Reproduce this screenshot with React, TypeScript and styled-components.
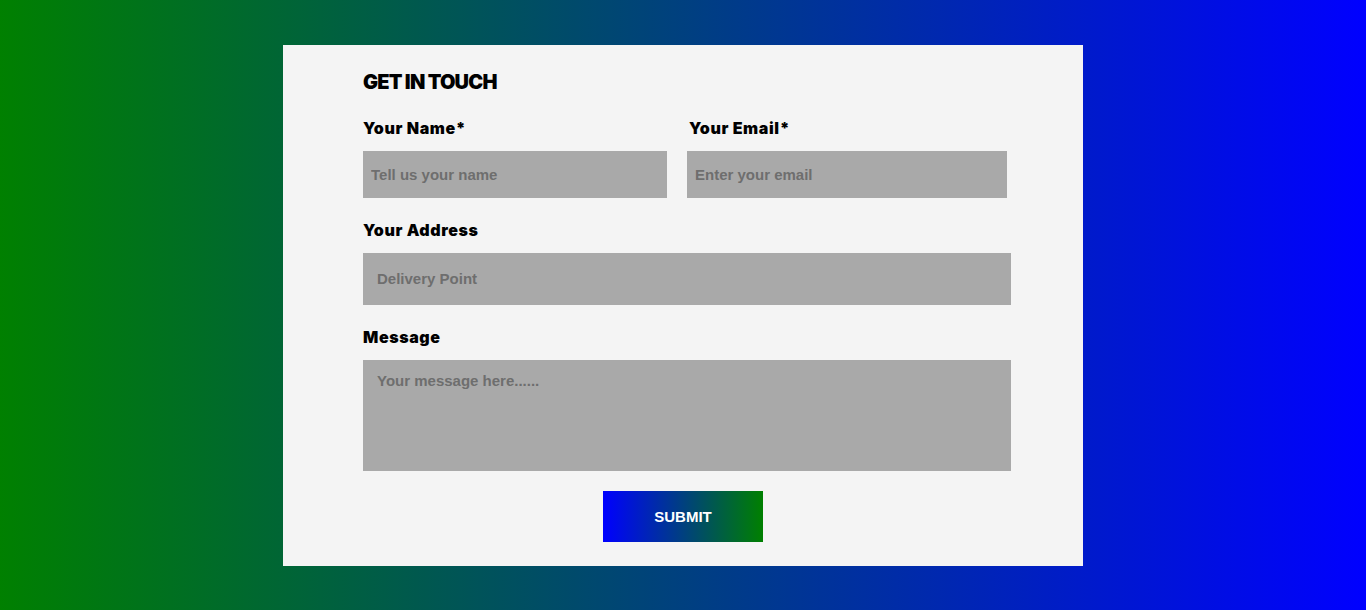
import React from 'react';
import styled, { createGlobalStyle } from 'styled-components';

const GlobalStyle = createGlobalStyle`
  html, body {
    margin: 0;
    padding: 0;
  }
  * {
    box-sizing: border-box;
  }
`;

const Page = styled.div`
  min-height: 100vh;
  display: flex;
  align-items: center;
  justify-content: center;
  background: linear-gradient(to right, #008000, #0000ff);
`;

const Card = styled.form`
  width: 800px;
  background-color: #f4f4f4;
  padding: 23px 72px 24px 80px;
  display: flex;
  flex-direction: column;
`;

const Title = styled.h2`
  margin: 0 0 20px;
  font-family: Inter, 'Noto Sans', sans-serif;
  font-size: 20px;
  line-height: 28px;
  font-weight: 900;
  color: #000;
  letter-spacing: -0.8px;
`;

const Row = styled.div`
  display: grid;
  grid-template-columns: 304px 320px;
  column-gap: 20px;
`;

const Field = styled.div`
  display: flex;
  flex-direction: column;
  margin-bottom: 20px;
`;

const Label = styled.label<{ $indent?: number }>`
  display: block;
  margin: 0 0 11px ${(p) => p.$indent ?? 0}px;
  font-family: Inter, 'Noto Sans', sans-serif;
  font-size: 16px;
  line-height: 24px;
  font-weight: 900;
  letter-spacing: 0.6px;
  color: #000;
`;

const Input = styled.input<{ $height: number; $pad: number }>`
  width: 100%;
  height: ${(p) => p.$height}px;
  border: none;
  outline: none;
  background-color: #a9a9a9;
  padding: 0 ${(p) => p.$pad}px;
  font-family: 'Liberation Sans', Arial, sans-serif;
  font-size: 15px;
  font-weight: 700;
  color: #333;

  &::placeholder {
    font-family: 'Liberation Sans', Arial, sans-serif;
    font-weight: 700;
    color: #6e6e6e;
  }
`;

const TextArea = styled.textarea`
  width: 100%;
  height: 111px;
  border: none;
  outline: none;
  resize: none;
  background-color: #a9a9a9;
  padding: 12px 14px;
  font-family: 'Liberation Sans', Arial, sans-serif;
  font-size: 15px;
  font-weight: 700;
  color: #333;

  &::placeholder {
    font-family: 'Liberation Sans', Arial, sans-serif;
    font-weight: 700;
    color: #6e6e6e;
  }
`;

const SubmitButton = styled.button`
  align-self: center;
  margin-left: -8px;
  width: 160px;
  height: 51px;
  padding: 1px 0 0;
  border: none;
  background: linear-gradient(to right, #0000ff, #008000);
  color: #fff;
  font-family: 'Liberation Sans', Arial, sans-serif;
  font-size: 15px;
  font-weight: 700;
  cursor: pointer;
`;

export default function App() {
  return (
    <>
      <GlobalStyle />
      <Page>
        <Card onSubmit={(e) => e.preventDefault()}>
          <Title>GET IN TOUCH</Title>
          <Row>
            <Field>
              <Label>Your Name*</Label>
              <Input $height={47} $pad={8} placeholder="Tell us your name" />
            </Field>
            <Field>
              <Label $indent={2}>Your Email*</Label>
              <Input $height={47} $pad={8} placeholder="Enter your email" />
            </Field>
          </Row>
          <Field>
            <Label>Your Address</Label>
            <Input $height={52} $pad={14} placeholder="Delivery Point" />
          </Field>
          <Field>
            <Label>Message</Label>
            <TextArea placeholder="Your message here......" />
          </Field>
          <SubmitButton type="submit">SUBMIT</SubmitButton>
        </Card>
      </Page>
    </>
  );
}
